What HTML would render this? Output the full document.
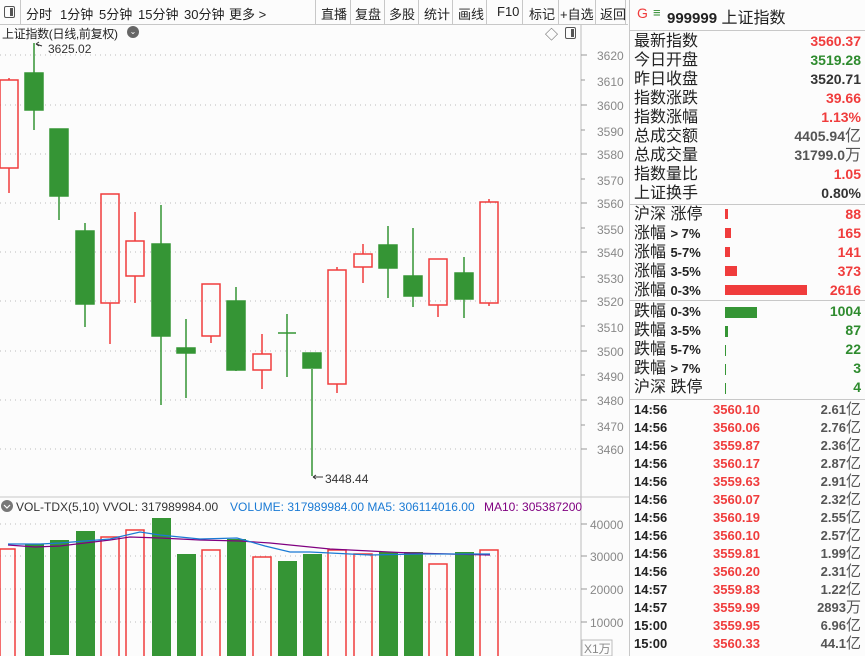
<!DOCTYPE html>
<html><head><meta charset="utf-8"><style>
*{margin:0;padding:0;box-sizing:border-box}
body{width:865px;height:656px;overflow:hidden;background:#fcfcfc;font-family:"Liberation Sans","Noto Sans CJK SC",sans-serif;position:relative;color:#222}
.a{position:absolute;white-space:nowrap}
.tb{font-size:13px;top:4px}
.sep{position:absolute;top:0;width:1px;height:24px;background:#c8c8c8}
.r{position:absolute;left:634px;width:227px;height:19px;font-size:16px;line-height:19px}
.r .v{position:absolute;right:0;top:0;font-weight:bold;font-size:14px}
.red{color:#f03c3c}.grn{color:#2e8b2e}.dk{color:#333}.gr{color:#555}
.b .v{font-size:14px}
.t{position:absolute;left:634px;width:227px;height:18px;font-size:13px;font-weight:bold;line-height:18px}
.t span{position:absolute;top:0}
</style></head><body>
<!-- toolbar -->
<div class="a" style="left:0;top:0;width:628px;height:25px;border-bottom:1px solid #c8c8c8;background:#fcfcfc"></div>
<div class="a" style="left:4px;top:6px;width:11px;height:12px;border:1.5px solid #555;border-radius:2px"></div>
<div class="a" style="left:10px;top:8px;width:3px;height:8px;background:#555"></div>
<div class="sep" style="left:20px"></div>
<div class="a tb" style="left:26px">分时</div>
<div class="a tb" style="left:60px">1分钟</div>
<div class="a tb" style="left:99px">5分钟</div>
<div class="a tb" style="left:138px">15分钟</div>
<div class="a tb" style="left:184px">30分钟</div>
<div class="a tb" style="left:229px">更多 &gt;</div>
<div class="sep" style="left:315px"></div><div class="a tb" style="left:321px">直播</div>
<div class="sep" style="left:350px"></div><div class="a tb" style="left:355px">复盘</div>
<div class="sep" style="left:384px"></div><div class="a tb" style="left:389px">多股</div>
<div class="sep" style="left:418px"></div><div class="a tb" style="left:424px">统计</div>
<div class="sep" style="left:452px"></div><div class="a tb" style="left:458px">画线</div>
<div class="sep" style="left:486px"></div><div class="a tb" style="left:497px">F10</div>
<div class="sep" style="left:522px"></div><div class="a tb" style="left:529px">标记</div>
<div class="sep" style="left:558px"></div><div class="a tb" style="left:560px">+自选</div>
<div class="sep" style="left:595px"></div><div class="a tb" style="left:600px">返回</div>
<div class="sep" style="left:625px"></div>
<div class="a" style="left:2px;top:25px;font-size:12px;letter-spacing:-0.3px">上证指数(日线,前复权)</div>
<div class="a" style="left:127px;top:26px;width:12px;height:12px;border-radius:6px;background:#666;color:#fff;font-size:8px;text-align:center;line-height:12px">⌄</div>
<div class="a" style="left:545px;top:24px;font-size:13px;color:#555">◇</div>
<div class="a" style="left:565px;top:27px;width:11px;height:12px;border:1.5px solid #555;border-radius:2px"></div>
<div class="a" style="left:571px;top:29px;width:3px;height:8px;background:#555"></div>

<svg class="a" style="left:0;top:0" width="630" height="656">
<g stroke="#bbb" stroke-dasharray="1,4">
<line x1="0" y1="55" x2="580" y2="55"/><line x1="0" y1="105" x2="580" y2="105"/><line x1="0" y1="154" x2="580" y2="154"/><line x1="0" y1="203" x2="580" y2="203"/><line x1="0" y1="252" x2="580" y2="252"/><line x1="0" y1="301" x2="580" y2="301"/><line x1="0" y1="351" x2="580" y2="351"/><line x1="0" y1="400" x2="580" y2="400"/><line x1="0" y1="449" x2="580" y2="449"/>
<line x1="0" y1="524" x2="580" y2="524"/><line x1="0" y1="556" x2="580" y2="556"/><line x1="0" y1="589" x2="580" y2="589"/><line x1="0" y1="622" x2="580" y2="622"/>
</g>
<line x1="581" y1="25" x2="581" y2="656" stroke="#bbb"/>
<line x1="0" y1="497" x2="630" y2="497" stroke="#c8c8c8"/>
<g stroke="#999">
<line x1="581" y1="55" x2="587" y2="55"/><line x1="581" y1="80" x2="585" y2="80"/><line x1="581" y1="105" x2="587" y2="105"/><line x1="581" y1="130" x2="585" y2="130"/><line x1="581" y1="154" x2="587" y2="154"/><line x1="581" y1="179" x2="585" y2="179"/><line x1="581" y1="203" x2="587" y2="203"/><line x1="581" y1="228" x2="585" y2="228"/><line x1="581" y1="252" x2="587" y2="252"/><line x1="581" y1="277" x2="585" y2="277"/><line x1="581" y1="301" x2="587" y2="301"/><line x1="581" y1="326" x2="585" y2="326"/><line x1="581" y1="351" x2="587" y2="351"/><line x1="581" y1="375" x2="585" y2="375"/><line x1="581" y1="400" x2="587" y2="400"/><line x1="581" y1="425" x2="585" y2="425"/><line x1="581" y1="449" x2="587" y2="449"/>
<line x1="581" y1="524" x2="587" y2="524"/><line x1="581" y1="556" x2="587" y2="556"/><line x1="581" y1="589" x2="587" y2="589"/><line x1="581" y1="622" x2="587" y2="622"/>
</g>
<g font-size="12" fill="#888" font-family="Liberation Sans">
<text x="597" y="60">3620</text><text x="597" y="86">3610</text><text x="597" y="110">3600</text><text x="597" y="136">3590</text><text x="597" y="159">3580</text><text x="597" y="185">3570</text><text x="597" y="208">3560</text><text x="597" y="234">3550</text><text x="597" y="257">3540</text><text x="597" y="283">3530</text><text x="597" y="306">3520</text><text x="597" y="332">3510</text><text x="597" y="356">3500</text><text x="597" y="381">3490</text><text x="597" y="405">3480</text><text x="597" y="431">3470</text><text x="597" y="454">3460</text>
<text x="590" y="529">40000</text><text x="590" y="561">30000</text><text x="590" y="594">20000</text><text x="590" y="627">10000</text>
</g>
<rect x="582" y="640" width="30" height="16" fill="#fcfcfc" stroke="#bbb"/>
<text x="584" y="653" font-size="12" fill="#888">X1万</text>
<!-- candles -->
<g stroke-width="1.5">
<g stroke="#f03c3c" fill="none">
<line x1="9" y1="78" x2="9" y2="80"/><line x1="9" y1="168" x2="9" y2="193"/><rect x="0" y="80" width="18" height="88"/>
<line x1="110" y1="303" x2="110" y2="344"/><rect x="101" y="194" width="18" height="109"/>
<line x1="135" y1="212" x2="135" y2="241"/><line x1="135" y1="276" x2="135" y2="303"/><rect x="126" y="241" width="18" height="35"/>
<line x1="211" y1="336" x2="211" y2="343"/><rect x="202" y="284" width="18" height="52"/>
<line x1="262" y1="334" x2="262" y2="354"/><line x1="262" y1="370" x2="262" y2="389"/><rect x="253" y="354" width="18" height="16"/>
<line x1="337" y1="267" x2="337" y2="270"/><line x1="337" y1="384" x2="337" y2="393"/><rect x="328" y="270" width="18" height="114"/>
<line x1="363" y1="244" x2="363" y2="254"/><line x1="363" y1="267" x2="363" y2="283"/><rect x="354" y="254" width="18" height="13"/>
<line x1="438" y1="305" x2="438" y2="317"/><rect x="429" y="259" width="18" height="46"/>
<line x1="489" y1="199" x2="489" y2="202"/><line x1="489" y1="303" x2="489" y2="306"/><rect x="480" y="202" width="18" height="101"/>
</g>
<g stroke="#359535" fill="#359535">
<line x1="34" y1="43" x2="34" y2="130"/><rect x="25" y="73" width="18" height="37"/>
<line x1="59" y1="129" x2="59" y2="220"/><rect x="50" y="129" width="18" height="67"/>
<line x1="85" y1="223" x2="85" y2="327"/><rect x="76" y="231" width="18" height="73"/>
<line x1="161" y1="205" x2="161" y2="405"/><rect x="152" y="244" width="18" height="92"/>
<line x1="186" y1="319" x2="186" y2="398"/><rect x="177" y="348" width="18" height="5"/>
<line x1="236" y1="287" x2="236" y2="371"/><rect x="227" y="301" width="18" height="69"/>
<line x1="287" y1="314" x2="287" y2="377"/><line x1="278" y1="333" x2="296" y2="333"/>
<line x1="312" y1="369" x2="312" y2="476"/><rect x="303" y="353" width="18" height="15"/>
<line x1="388" y1="226" x2="388" y2="298"/><rect x="379" y="245" width="18" height="23"/>
<line x1="413" y1="228" x2="413" y2="307"/><rect x="404" y="276" width="18" height="20"/>
<line x1="464" y1="257" x2="464" y2="318"/><rect x="455" y="273" width="18" height="26"/>
</g>
</g>
<g font-size="12" fill="#333"><text x="48" y="53">3625.02</text><text x="325" y="483">3448.44</text></g>
<path d="M36 44 l6 2 M36 44 l3 -2 M36 44 l3 2" stroke="#333" fill="none"/>
<path d="M313 477 h10 M313 477 l3 -2 M313 477 l3 2" stroke="#333" fill="none"/>
<!-- volume -->
<g stroke-width="1.5">
<g stroke="#f03c3c" fill="none">
<rect x="0" y="549" width="15" height="110"/><rect x="101" y="537" width="18" height="122"/><rect x="126" y="530" width="18" height="129"/><rect x="202" y="550" width="18" height="109"/><rect x="253" y="557" width="18" height="102"/><rect x="328" y="550" width="18" height="109"/><rect x="354" y="554" width="18" height="105"/><rect x="429" y="564" width="18" height="95"/><rect x="480" y="550" width="18" height="109"/>
</g>
<g fill="#359535">
<rect x="25" y="544" width="19" height="115"/><rect x="50" y="540" width="19" height="115"/><rect x="76" y="531" width="19" height="125"/><rect x="152" y="518" width="19" height="138"/><rect x="177" y="554" width="19" height="102"/><rect x="227" y="539" width="19" height="117"/><rect x="278" y="561" width="19" height="95"/><rect x="303" y="554" width="19" height="102"/><rect x="379" y="552" width="19" height="104"/><rect x="404" y="552" width="19" height="104"/><rect x="455" y="552" width="19" height="104"/>
</g>
</g>
<polyline fill="none" stroke="#800080" stroke-width="1.2" points="8,545 35,547 60,546 110,540 130,537 160,538 200,540 240,541 270,543 330,549 370,551 410,553 490,555"/>
<polyline fill="none" stroke="#1a7ad4" stroke-width="1.2" points="8,544 40,544 60,543 110,539 140,532 160,535 200,539 237,538 265,546 290,552 310,552 370,555 420,554 490,554"/>
<circle cx="7" cy="506" r="6" fill="#777"/>
<path d="M4 505 l3 3 l3 -3" stroke="#fff" fill="none" stroke-width="1.2"/>
<text x="16" y="511" font-size="12" fill="#333">VOL-TDX(5,10) VVOL: 317989984.00</text>
<text x="230" y="511" font-size="12" fill="#1a7ad4">VOLUME: 317989984.00 MA5: 306114016.00</text>
<text x="484" y="511" font-size="12" fill="#800080">MA10: 305387200</text>
</svg>

<!-- right panel -->
<div class="a" style="left:629px;top:0;width:1px;height:656px;background:#c8c8c8"></div>
<div class="a" style="left:637px;top:5px;font-size:14px;color:#f03c3c">G</div>
<div class="a" style="left:653px;top:5px;font-size:13px;color:#2e8b2e">≡</div>
<div class="a" style="left:667px;top:4px;font-size:16px;color:#222"><b style="font-size:15px">999999</b> 上证指数</div>
<div class="a" style="left:630px;top:30px;width:235px;height:1px;background:#c8c8c8"></div>
<div class="r" style="top:32px">最新指数<span class="v red">3560.37</span></div>
<div class="r" style="top:51px">今日开盘<span class="v grn">3519.28</span></div>
<div class="r" style="top:70px">昨日收盘<span class="v dk">3520.71</span></div>
<div class="r" style="top:89px">指数涨跌<span class="v red">39.66</span></div>
<div class="r" style="top:108px">指数涨幅<span class="v red">1.13%</span></div>
<div class="r" style="top:127px">总成交额<span class="v gr">4405.94<span style="font-weight:normal;font-size:16px">亿</span></span></div>
<div class="r" style="top:146px">总成交量<span class="v gr">31799.0<span style="font-weight:normal;font-size:16px">万</span></span></div>
<div class="r" style="top:165px">指数量比<span class="v red">1.05</span></div>
<div class="r" style="top:184px">上证换手<span class="v dk">0.80%</span></div>
<div class="a" style="left:630px;top:204px;width:235px;height:1px;background:#c8c8c8"></div>
<div class="r b" style="top:205px">沪深 涨停<span class="v red">88</span></div>
<div class="r b" style="top:224px">涨幅 <b style="font-size:13px">&gt; 7%</b><span class="v red">165</span></div>
<div class="r b" style="top:243px">涨幅 <b style="font-size:13px">5-7%</b><span class="v red">141</span></div>
<div class="r b" style="top:262px">涨幅 <b style="font-size:13px">3-5%</b><span class="v red">373</span></div>
<div class="r b" style="top:281px">涨幅 <b style="font-size:13px">0-3%</b><span class="v red">2616</span></div>
<div class="a" style="left:725px;top:209px;width:3px;height:10px;background:#f03c3c"></div>
<div class="a" style="left:725px;top:228px;width:6px;height:10px;background:#f03c3c"></div>
<div class="a" style="left:725px;top:247px;width:5px;height:10px;background:#f03c3c"></div>
<div class="a" style="left:725px;top:266px;width:12px;height:10px;background:#f03c3c"></div>
<div class="a" style="left:725px;top:285px;width:82px;height:10px;background:#f03c3c"></div>
<div class="a" style="left:630px;top:300px;width:235px;height:1px;background:#c8c8c8"></div>
<div class="r b" style="top:302px">跌幅 <b style="font-size:13px">0-3%</b><span class="v grn">1004</span></div>
<div class="r b" style="top:321px">跌幅 <b style="font-size:13px">3-5%</b><span class="v grn">87</span></div>
<div class="r b" style="top:340px">跌幅 <b style="font-size:13px">5-7%</b><span class="v grn">22</span></div>
<div class="r b" style="top:359px">跌幅 <b style="font-size:13px">&gt; 7%</b><span class="v grn">3</span></div>
<div class="r b" style="top:378px">沪深 跌停<span class="v grn">4</span></div>
<div class="a" style="left:725px;top:307px;width:32px;height:11px;background:#359535"></div>
<div class="a" style="left:725px;top:326px;width:3px;height:11px;background:#359535"></div>
<div class="a" style="left:725px;top:345px;width:1px;height:11px;background:#359535"></div>
<div class="a" style="left:725px;top:364px;width:1px;height:11px;background:#359535"></div>
<div class="a" style="left:725px;top:383px;width:1px;height:11px;background:#359535"></div>
<div class="a" style="left:630px;top:399px;width:235px;height:1px;background:#c8c8c8"></div>
<div class="t" style="top:401px"><span style="left:0">14:56</span><span class="red" style="left:79px">3560.10</span><span class="gr" style="right:0">2.61<i style="font-style:normal;font-weight:normal;font-size:15px">亿</i></span></div>
<div class="t" style="top:419px"><span style="left:0">14:56</span><span class="red" style="left:79px">3560.06</span><span class="gr" style="right:0">2.76<i style="font-style:normal;font-weight:normal;font-size:15px">亿</i></span></div>
<div class="t" style="top:437px"><span style="left:0">14:56</span><span class="red" style="left:79px">3559.87</span><span class="gr" style="right:0">2.36<i style="font-style:normal;font-weight:normal;font-size:15px">亿</i></span></div>
<div class="t" style="top:455px"><span style="left:0">14:56</span><span class="red" style="left:79px">3560.17</span><span class="gr" style="right:0">2.87<i style="font-style:normal;font-weight:normal;font-size:15px">亿</i></span></div>
<div class="t" style="top:473px"><span style="left:0">14:56</span><span class="red" style="left:79px">3559.63</span><span class="gr" style="right:0">2.91<i style="font-style:normal;font-weight:normal;font-size:15px">亿</i></span></div>
<div class="t" style="top:491px"><span style="left:0">14:56</span><span class="red" style="left:79px">3560.07</span><span class="gr" style="right:0">2.32<i style="font-style:normal;font-weight:normal;font-size:15px">亿</i></span></div>
<div class="t" style="top:509px"><span style="left:0">14:56</span><span class="red" style="left:79px">3560.19</span><span class="gr" style="right:0">2.55<i style="font-style:normal;font-weight:normal;font-size:15px">亿</i></span></div>
<div class="t" style="top:527px"><span style="left:0">14:56</span><span class="red" style="left:79px">3560.10</span><span class="gr" style="right:0">2.57<i style="font-style:normal;font-weight:normal;font-size:15px">亿</i></span></div>
<div class="t" style="top:545px"><span style="left:0">14:56</span><span class="red" style="left:79px">3559.81</span><span class="gr" style="right:0">1.99<i style="font-style:normal;font-weight:normal;font-size:15px">亿</i></span></div>
<div class="t" style="top:563px"><span style="left:0">14:56</span><span class="red" style="left:79px">3560.20</span><span class="gr" style="right:0">2.31<i style="font-style:normal;font-weight:normal;font-size:15px">亿</i></span></div>
<div class="t" style="top:581px"><span style="left:0">14:57</span><span class="red" style="left:79px">3559.83</span><span class="gr" style="right:0">1.22<i style="font-style:normal;font-weight:normal;font-size:15px">亿</i></span></div>
<div class="t" style="top:599px"><span style="left:0">14:57</span><span class="red" style="left:79px">3559.99</span><span class="gr" style="right:0">2893<i style="font-style:normal;font-weight:normal;font-size:15px">万</i></span></div>
<div class="t" style="top:617px"><span style="left:0">15:00</span><span class="red" style="left:79px">3559.95</span><span class="gr" style="right:0">6.96<i style="font-style:normal;font-weight:normal;font-size:15px">亿</i></span></div>
<div class="t" style="top:635px"><span style="left:0">15:00</span><span class="red" style="left:79px">3560.33</span><span class="gr" style="right:0">44.1<i style="font-style:normal;font-weight:normal;font-size:15px">亿</i></span></div>
</body></html>
